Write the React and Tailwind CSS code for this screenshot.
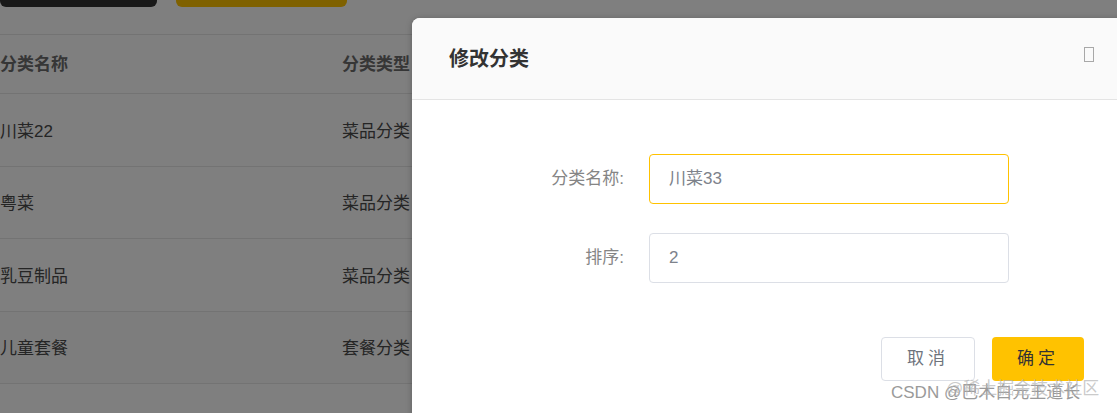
import React from 'react';

const rows = [
  { name: '川菜22', type: '菜品分类' },
  { name: '粤菜', type: '菜品分类' },
  { name: '乳豆制品', type: '菜品分类' },
  { name: '儿童套餐', type: '套餐分类' },
  { name: '', type: '' },
];

export default function App() {
  return (
    <div
      className="relative w-[1117px] h-[413px] overflow-hidden bg-white"
      style={{ fontFamily: '"Liberation Sans", "Noto Sans CJK SC", sans-serif' }}
    >
      {/* page underneath */}
      <div className="flex gap-[19px]">
        <div className="w-[157px] h-[7px] bg-[#333333] rounded-b-md"></div>
        <div className="w-[171px] h-[7px] bg-[#ffc200] rounded-b-md"></div>
      </div>
      <div className="mt-[27px] border-t border-[#e6e6e6]">
        <div className="grid grid-cols-[342px_1fr] h-[59px] pt-[2px] items-center border-b border-[#e6e6e6] text-[17px] font-bold text-[#6c6c6c]">
          <span>分类名称</span>
          <span>分类类型</span>
        </div>
        {rows.map((r, i) => (
          <div
            key={i}
            className={`grid grid-cols-[342px_1fr] h-[72.5px] pt-[3px] items-center border-b border-[#e6e6e6] text-[17px] text-[#4a4a4a] ${i === 3 ? 'bg-[#fafafa]' : ''}`}
          >
            <span>{r.name}</span>
            <span>{r.type}</span>
          </div>
        ))}
      </div>

      {/* mask */}
      <div className="absolute inset-0 bg-black/50"></div>

      {/* dialog */}
      <div className="absolute left-[412px] top-[18px] w-[760px] h-[520px] bg-white rounded-lg shadow-[0_1px_6px_rgba(0,0,0,0.25)]">
        <div className="h-[82px] pl-[37px] bg-[#fafafa] border-b border-[#e4e4e4] rounded-t-lg">
          <div className="w-[645px] h-full flex items-center justify-between">
            <span className="text-[20px] font-bold text-[#333333]">修改分类</span>
            <span className="w-[10px] h-[15px] border border-[#a8a8a8] mb-[8px]"></span>
          </div>
        </div>
        <div className="pt-[54px] flex flex-col gap-[29px]">
          <div className="flex items-center">
            <span className="w-[212px] text-right text-[17px] text-[#858585]">分类名称:</span>
            <div className="ml-[25px] w-[360px] h-[50px] flex items-center pl-[19px] border border-[#ffc200] rounded-[4px] text-[17px] text-[#7d828b]">
              川菜33
            </div>
          </div>
          <div className="flex items-center">
            <span className="w-[212px] text-right text-[17px] text-[#858585]">排序:</span>
            <div className="ml-[25px] w-[360px] h-[50px] flex items-center pl-[19px] border border-[#dcdfe6] rounded-[4px] text-[17px] text-[#7d828b]">
              2
            </div>
          </div>
        </div>
        <div className="flex gap-[17px] pl-[469px] pt-[54px]">
          <button className="w-[94px] h-[44px] border border-[#dcdfe6] rounded-[4px] bg-white text-[17px] text-[#6e737c] tracking-[4px]">
            取消
          </button>
          <button className="w-[92px] h-[44px] rounded-[4px] bg-[#ffc200] text-[17px] text-[#333333] tracking-[4px]">
            确定
          </button>
        </div>
      </div>

      {/* watermark */}
      <div className="absolute left-[891px] top-[380px] text-[17px] text-[#9a9a9a] whitespace-nowrap">
        CSDN @巴木白元王道长
      </div>
      <div className="absolute left-[946px] top-[376px] text-[17px] text-[#b4b4b4]/70 whitespace-nowrap">
        @稀土掘金技术社区
      </div>
    </div>
  );
}
